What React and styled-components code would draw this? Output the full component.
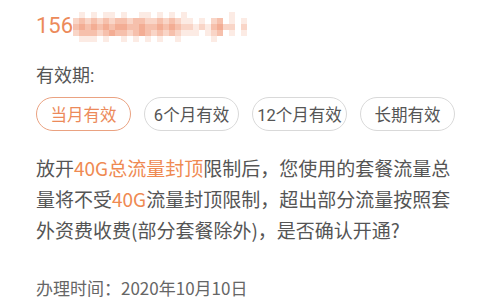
import React from "react";
import styled, { createGlobalStyle } from "styled-components";

const Global = createGlobalStyle`
  html, body { margin: 0; padding: 0; background: #fff; }
  body { font-family: Roboto, "Noto Sans CJK SC", sans-serif; }
`;

const Page = styled.div`
  width: 480px;
  height: 300px;
  box-sizing: border-box;
  padding: 11px 24px 0 36px;
  overflow: hidden;
  display: flex;
  flex-direction: column;
`;

const PhoneRow = styled.div`
  display: flex;
  align-items: center;
  height: 30px;
`;

const Phone = styled.span`
  font-size: 22px;
  line-height: 30px;
  color: #ec8a5a;
`;

const Mosaic = styled.svg`
  display: block;
  margin-top: 2px;
`;

const Label = styled.div`
  margin-top: 22px;
  font-size: 18px;
  line-height: 26px;
  color: #555;
`;

const Chips = styled.div`
  margin-top: 8px;
  width: 419px;
  display: flex;
  justify-content: space-between;
`;

const Chip = styled.div`
  width: 95px;
  height: 34px;
  box-sizing: border-box;
  border-radius: 17px;
  border: 1px solid ${(p) => (p.$active ? "#eaa281" : "#d9d9d9")};
  color: ${(p) => (p.$active ? "#ec8a5a" : "#555")};
  font-size: 16.5px;
  display: flex;
  align-items: center;
  justify-content: center;
  white-space: nowrap;
`;

const Para = styled.p`
  margin: 21px 0 0;
  font-size: 19px;
  line-height: 31px;
  color: #555;
  white-space: nowrap;
  font-family: "Noto Sans CJK SC", sans-serif;
`;

const Hl = styled.span`
  color: #ef8a52;
`;

const DateLine = styled.div`
  margin-top: 31px;
  font-size: 17px;
  line-height: 24px;
  color: #666;
  font-family: "Noto Sans CJK SC", sans-serif;
`;

const rows = [
  "01010110100110101010000000100",
  "23232323323322323211010230101",
  "34343434433433434322121342202",
  "23332343323432323211101230101",
  "01110100101010100100000100000",
];
const shades = ["transparent", "#fcebe4", "#f9d5c7", "#f6c0ac", "#f3ad94"];

function PixelBlur() {
  const cells = [];
  rows.forEach((r, y) =>
    r.split("").forEach((c, x) => {
      const v = Number(c);
      if (v > 0)
        cells.push(
          <rect key={`${x}-${y}`} x={x * 6} y={y * 6} width="6" height="6" fill={shades[v]} />
        );
    })
  );
  return (
    <Mosaic width="174" height="30" viewBox="0 0 174 30">
      {cells}
    </Mosaic>
  );
}

const periods = ["当月有效", "6个月有效", "12个月有效", "长期有效"];

export default function App() {
  return (
    <>
      <Global />
      <Page>
        <PhoneRow>
          <Phone>156</Phone>
          <PixelBlur />
        </PhoneRow>
        <Label>有效期:</Label>
        <Chips>
          {periods.map((p, i) => (
            <Chip key={p} $active={i === 0}>
              {p}
            </Chip>
          ))}
        </Chips>
        <Para>
          放开<Hl>40G总流量封顶</Hl>限制后，您使用的套餐流量总
          <br />
          量将不受<Hl>40G</Hl>流量封顶限制，超出部分流量按照套
          <br />
          外资费收费(部分套餐除外)，是否确认开通?
        </Para>
        <DateLine>办理时间：2020年10月10日</DateLine>
      </Page>
    </>
  );
}
